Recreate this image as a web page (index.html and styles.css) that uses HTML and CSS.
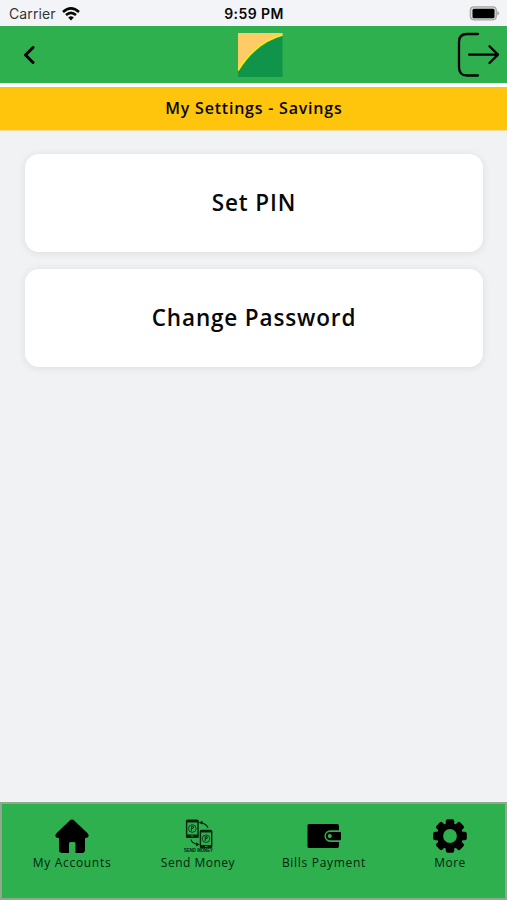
FILE: index.html
```html
<!DOCTYPE html>
<html lang="en">
<head>
<meta charset="utf-8">
<title>My Settings</title>
<link rel="stylesheet" href="styles.css">
</head>
<body>
<div class="status">
  <div class="carrier"><span class="carrier-name">Carrier</span>
    <svg width="18" height="14" viewBox="0 0 18 14" fill="none" stroke="#050505" stroke-width="2.6"><path d="M1 4.9Q9-2 17 4.9M4 8.1Q9 3.8 14 8.1"/><path d="M6.2 10.4Q9 8.2 11.8 10.4L9 13.4Z" fill="#050505" stroke="none"/></svg>
  </div>
  <span class="time">9:59 PM</span>
  <svg class="battery" width="31" height="15" viewBox="0 0 31 15"><rect x="1.3" y=".8" width="26" height="13" rx="3.5" fill="#d8d8d9" stroke="#a5a5a7" stroke-width="1.2"/><path d="M28.3 5Q32 7.2 28.3 9.5Z" fill="#a5a5a7"/><rect x="3.5" y="2.8" width="22" height="9.4" rx="1.5" fill="#000"/></svg>
</div>
<header class="header">
  <svg class="back" width="14" height="22" viewBox="0 0 14 22" fill="none" stroke="#000" stroke-width="3" stroke-linecap="round" stroke-linejoin="round"><path d="M12 3.5L4.5 11L12 18.5"/></svg>
  <svg width="45" height="45" viewBox="0 0 45 45"><path fill="#ffcb66" d="M0 1H44.5V4L0 39Z"/><path fill="#109449" d="M0 39Q17 11 44.5 3.5V45H0Z"/><path d="M0 38.5Q17 10.5 44.5 3" fill="none" stroke="#f1ef12" stroke-width="1.8"/></svg>
  <svg class="logout" width="44" height="46" viewBox="0 0 44 46" fill="none" stroke="#000" stroke-width="2.3" stroke-linecap="round" stroke-linejoin="round"><path d="M21 2H10Q2 2 2 10V35Q2 43.5 10 43.5H21M12 22.6H41M32.5 14.2L41 22.6L32.5 31"/></svg>
</header>
<h1 class="title">My Settings - Savings</h1>
<main class="content">
  <div class="card">Set PIN</div>
  <div class="card">Change Password</div>
</main>
<nav class="tabs">
  <div class="tab">
    <svg width="34" height="34" viewBox="0 0 34 34"><path d="M17 .5Q18.2.5 19.5 1.7L32.8 14.5Q35.2 18.3 31 19H30V31Q30 34 27 34H20.5V24.5Q20.5 23 19 23H15.5Q14 23 14 24.5V34H7.5Q4 34 4 31V19H3Q-1.2 18.3 1.2 14.5L14.5 1.7Q15.8.5 17 .5Z"/></svg>
    <span>My Accounts</span>
  </div>
  <div class="tab tab-send">
    <svg class="send-icon" width="34" height="34" viewBox="0 0 34 34">
      <g fill="none" stroke="#05240c">
        <rect x="5.6" y="1.2" width="11.4" height="17" rx="1" stroke-width="1.4"/>
        <rect x="19.4" y="11.5" width="11.3" height="17" rx="1" stroke-width="1.4"/>
        <circle cx="11.3" cy="9.5" r="3.8" stroke-width=".8"/><circle cx="25" cy="19.7" r="3.8" stroke-width=".8"/>
        <path d="M10.5 11.8V7.5H12.4Q13.7 9.5 10.5 9.7M24.2 22V17.7H26.1Q27.4 19.7 24.2 19.9" stroke-width=".9"/>
        <path d="M18.5 3.6Q24.5 3.8 27 8.7M10 20.5Q10.5 24.5 17 25.3" stroke-width="1.1"/>
      </g>
      <g fill="#05240c"><path d="M5 1H17.5V3.5H5ZM5 15.5H17.5V18.8H5ZM19 11H31V13.5H19ZM19 26H31V29H19ZM18 3.6L21.5 1.8V5.5ZM18.5 25.5L15 23.2V27.5Z"/><text x="3" y="33.4" class="icon-caption" textLength="29" lengthAdjust="spacingAndGlyphs">SEND MONEY</text></g>
      <path d="M10 17H12.5M24 27.5H26.5" stroke="#2fb04f" stroke-width=".8"/>
    </svg>
    <span>Send Money</span>
  </div>
  <div class="tab">
    <svg width="34" height="34" viewBox="0 0 34 34"><path d="M2 5H30Q32 5 32 7V11.3H23.2A5.8 5.8 0 0 0 23.2 22.9H32V27Q32 29 30 29H2Q.5 29 .5 27.5V6.5Q.5 5 2 5Z"/><path fill-rule="evenodd" d="M23 13H33Q34 13 34 14V20Q34 21.2 32.8 21.2H23A4.1 4.1 0 0 1 23 13ZM22.8 15A2.1 2.1 0 1 0 22.8 19.2A2.1 2.1 0 1 0 22.8 15Z"/></svg>
    <span>Bills Payment</span>
  </div>
  <div class="tab tab-more">
    <svg width="34" height="34" viewBox="-17 -17 34 34">
      <defs><rect id="tooth" x="-4.2" y="-16.8" width="8.4" height="8" rx="2"/></defs>
      <circle r="10" fill="none" stroke="#000" stroke-width="6.2"/>
      <use href="#tooth"/><use href="#tooth" transform="rotate(45)"/><use href="#tooth" transform="rotate(90)"/><use href="#tooth" transform="rotate(135)"/><use href="#tooth" transform="rotate(180)"/><use href="#tooth" transform="rotate(225)"/><use href="#tooth" transform="rotate(270)"/><use href="#tooth" transform="rotate(315)"/>
    </svg>
    <span>More</span>
  </div>
</nav>
</body>
</html>
```
FILE: styles.css
```css
* { box-sizing: border-box; }
body {
  margin: 0;
  height: 900px;
  display: flex;
  flex-direction: column;
  overflow: hidden;
  background: #f0f2f4;
  color: #080808;
  font-family: "Open Sans", "Noto Sans", sans-serif;
}
svg { display: block; flex: none; }
.status {
  height: 26px;
  flex: none;
  display: grid;
  grid-template-columns: 1fr 62px 1fr;
  align-items: center;
  padding: 1px 7px 0 8px;
  background: #f3f4f7;
  font: 400 14px/24px Inter, sans-serif;
}
.carrier { display: flex; align-items: center; gap: 6px; padding-left: 1px; }
.carrier-name { color: #333436; letter-spacing: .1px; }
.time { text-align: center; font-weight: 600; letter-spacing: .4px; white-space: nowrap; }
.battery { justify-self: end; }
.header {
  height: 57px;
  flex: none;
  display: grid;
  grid-template-columns: 1fr 45px 1fr;
  align-items: center;
  padding: 0 6px 0 20px;
  background: #2fb04f;
}
.back { justify-self: start; margin-left: 1px; }
.logout { justify-self: end; }
.title {
  height: 48px;
  flex: none;
  margin: 0;
  border-top: 4px solid #fff;
  border-bottom: 1px solid #f8dfa0;
  background: #ffc40c;
  text-align: center;
  font-size: 16px;
  font-weight: 600;
  line-height: 43px;
  letter-spacing: .78px;
  text-indent: .8px;
}
.content {
  flex: 1;
  display: flex;
  flex-direction: column;
  gap: 17px;
  padding: 23.4px 24px 0 25px;
}
.card {
  height: 98px;
  display: flex;
  align-items: center;
  justify-content: center;
  border-radius: 14px;
  background: #fff;
  box-shadow: 0 1px 9px rgba(0, 0, 0, .09);
  font-size: 22.5px;
  font-weight: 600;
  line-height: 30px;
  letter-spacing: .85px;
}
.tabs {
  height: 98px;
  flex: none;
  display: grid;
  grid-template-columns: repeat(4, 126px);
  padding: 15px 0 0 7px;
  border: 2px solid #8fa88f;
  background: #2fb04f;
  overflow: hidden;
}
.tab {
  display: flex;
  flex-direction: column;
  align-items: center;
  font-size: 12px;
  font-weight: 500;
  line-height: 20px;
  letter-spacing: .7px;
  color: #06240d;
  white-space: nowrap;
}
.tab-send, .tab-more { letter-spacing: .5px; }
.send-icon { overflow: visible; }
.icon-caption { font: 700 4.5px "Liberation Sans", sans-serif; letter-spacing: 0; }
```
